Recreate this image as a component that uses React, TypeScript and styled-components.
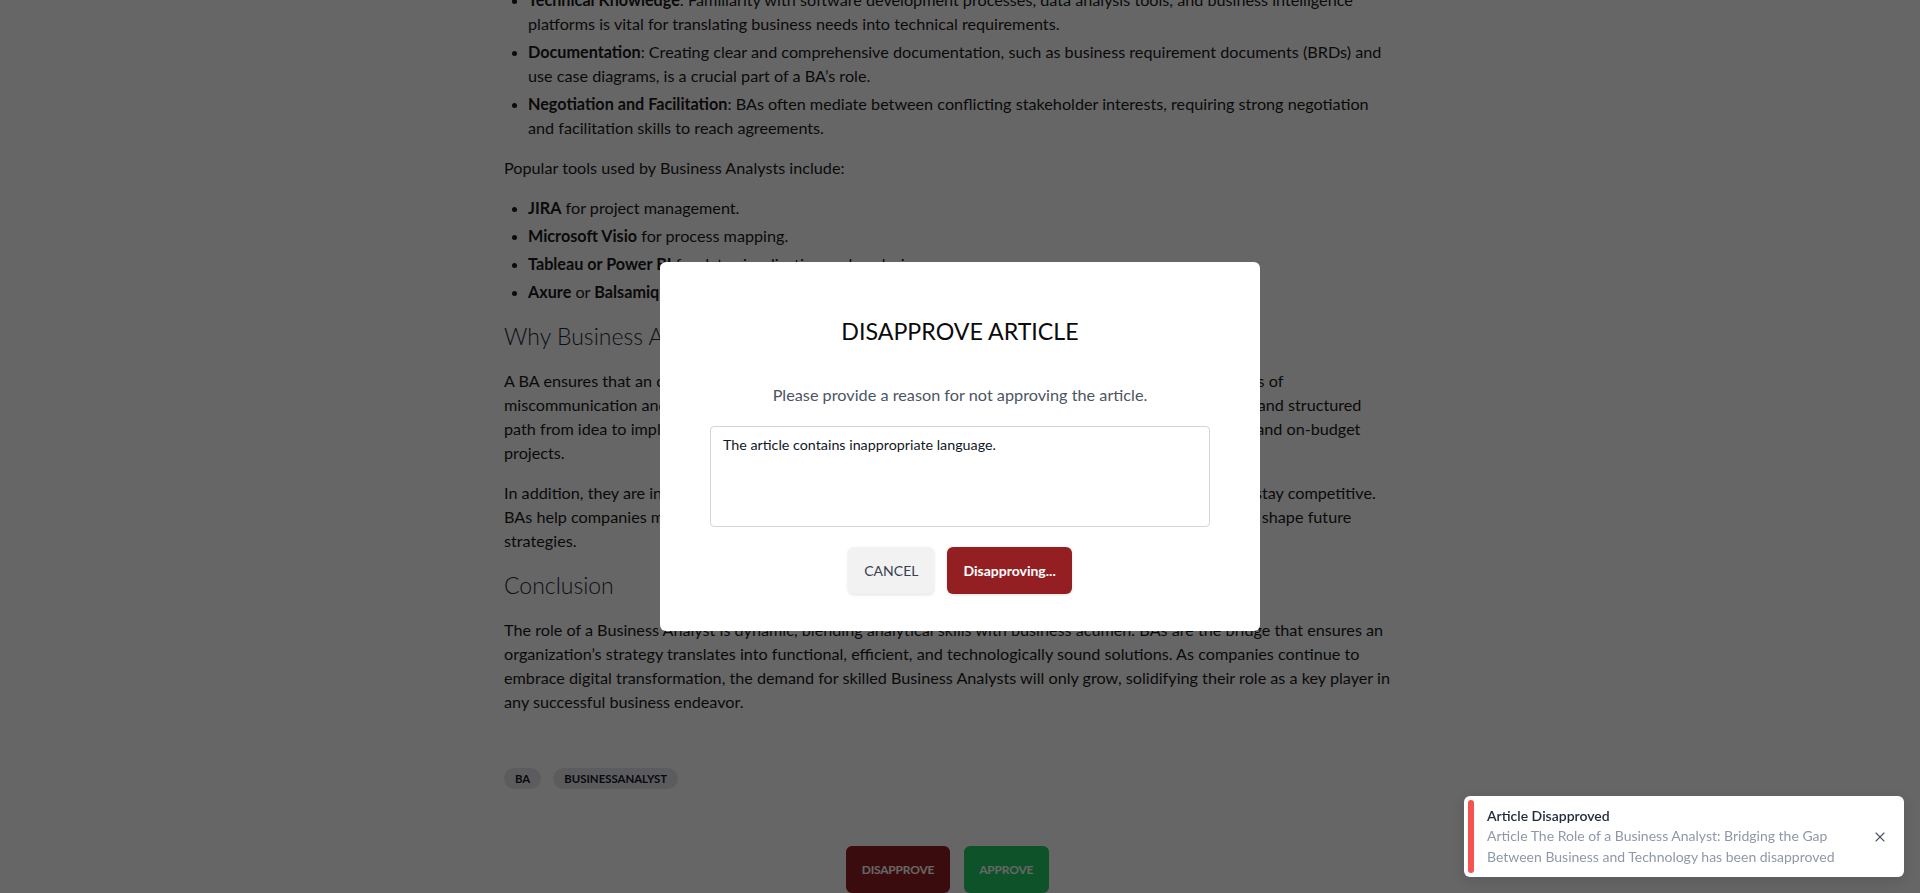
import React from "react"
import styled, { createGlobalStyle } from "styled-components"
import { X } from "lucide-react"

const Global = createGlobalStyle`
    html, body {
        margin: 0;
        height: 100%;
        overflow: hidden;
        background: #ffffff;
        font-family: Lato, "Segoe UI", sans-serif;
        color: #1a1a1a;
    }
    * { box-sizing: border-box; }
`

type ButtonTone = "danger" | "success" | "muted"

const tones: Record<ButtonTone, { bg: string, fg: string, weight: number }> = {
    danger: { bg: "#931f22", fg: "#ffffff", weight: 700 },
    success: { bg: "#22cc64", fg: "#ffffff", weight: 700 },
    muted: { bg: "#f2f2f2", fg: "#374151", weight: 400 },
}

export default function App() {
    return <>
        <Global />
        <Page>
            <Article>
                <FirstList>
                    <Item><b>Technical Knowledge</b>: Familiarity with software development processes, data analysis tools, and business intelligence platforms is vital for translating business needs into technical requirements.</Item>
                    <Item><b>Documentation</b>: Creating clear and comprehensive documentation, such as business requirement documents (BRDs) and use case diagrams, is a crucial part of a BA’s role.</Item>
                    <Item><b>Negotiation and Facilitation</b>: BAs often mediate between conflicting stakeholder interests, requiring strong negotiation and facilitation skills to reach agreements.</Item>
                </FirstList>
                <Para>Popular tools used by Business Analysts include:</Para>
                <List>
                    <Item><b>JIRA</b> for project management.</Item>
                    <Item><b>Microsoft Visio</b> for process mapping.</Item>
                    <Item><b>Tableau or Power BI</b> for data visualization and analysis.</Item>
                    <Item><b>Axure</b> or <b>Balsamiq</b> for wireframing and prototyping.</Item>
                </List>
                <Heading>Why Business Analysts Are Essential</Heading>
                <Para>A BA ensures that an organization’s technology investments deliver real value, reducing the potential pitfalls of miscommunication and misaligned expectations between key stakeholders. Their work helps create a clear and structured path from idea to implementation, which ultimately leads to fewer revisions and more successful, on-time, and on‑budget projects.</Para>
                <Para>In addition, they are instrumental in helping organizations adapt to changing market conditions in order to stay competitive. BAs help companies make data-driven decisions by analyzing market trends and providing insights that can shape future strategies.</Para>
                <Heading>Conclusion</Heading>
                <Para>The role of a Business Analyst is dynamic, blending analytical skills with business acumen. BAs are the bridge that ensures an organization’s strategy translates into functional, efficient, and technologically sound solutions. As companies continue to embrace digital transformation, the demand for skilled Business Analysts will only grow, solidifying their role as a key player in any successful business endeavor.</Para>
                <Tags>
                    <Tag>BA</Tag>
                    <Tag>BusinessAnalyst</Tag>
                </Tags>
                <Actions>
                    <Button $tone="danger" $upper $small>Disapprove</Button>
                    <Button $tone="success" $upper $small>Approve</Button>
                </Actions>
            </Article>
        </Page>

        <Overlay>
            <Modal>
                <ModalTitle>Disapprove Article</ModalTitle>
                <ModalText>Please provide a reason for not approving the article.</ModalText>
                <Reason readOnly value="The article contains inappropriate language." />
                <ModalActions>
                    <Button $tone="muted" $upper $shadow>Cancel</Button>
                    <Button $tone="danger" $shadow>Disapproving...</Button>
                </ModalActions>
            </Modal>
        </Overlay>

        <Toast>
            <ToastBar />
            <ToastBody>
                <ToastTitle>Article Disapproved</ToastTitle>
                <ToastText>Article The Role of a Business Analyst: Bridging the Gap Between Business and Technology has been disapproved</ToastText>
            </ToastBody>
            <ToastClose aria-label="Close"><X size={16} strokeWidth={1.6} /></ToastClose>
        </Toast>
    </>
}

const Page = styled.main`
    display: flex;
    justify-content: center;
    padding-right: 20px;
`
const Article = styled.article`
    width: 892px;
    font-size: 16.2px;
    line-height: 24px;
`
const List = styled.ul`
    margin: 16px 0;
    padding-left: 24px;
    list-style: disc;
`
const FirstList = styled(List)`
    margin-top: -12px;
`
const Item = styled.li`
    margin-bottom: 4px;
    &:last-child { margin-bottom: 0; }
    &::marker { font-size: 14px; }
    b { font-weight: 700; }
`
const Para = styled.p`
    margin: 16px 0;
`
const Heading = styled.h2`
    margin: 16px 0;
    font-size: 23px;
    line-height: 33px;
    font-weight: 300;
    color: #1f2937;
`
const Tags = styled.div`
    display: flex;
    gap: 12px;
    margin-top: 54px;
`
const Tag = styled.span`
    height: 21px;
    padding: 0 11px;
    border-radius: 999px;
    background: #e5e7eb;
    color: #111827;
    font-size: 11.4px;
    font-weight: 700;
    line-height: 21px;
    text-transform: uppercase;
`
const Actions = styled.div`
    display: flex;
    justify-content: center;
    gap: 14px;
    margin-top: 57px;
    padding-right: 5px;
`
const Button = styled.button<{ $tone: ButtonTone, $upper?: boolean, $shadow?: boolean, $small?: boolean }>`
    height: 47px;
    padding: 0 ${p => p.$small ? 15.5 : 16}px;
    border: none;
    border-radius: 6px;
    background: ${p => tones[p.$tone].bg};
    color: ${p => tones[p.$tone].fg};
    font-family: Lato, "Segoe UI", sans-serif;
    font-size: ${p => p.$small ? 12 : 14}px;
    letter-spacing: ${p => p.$small ? "-0.2px" : "0"};
    font-weight: ${p => tones[p.$tone].weight};
    text-transform: ${p => p.$upper ? "uppercase" : "none"};
    box-shadow: ${p => p.$shadow ? "0 1px 3px rgba(0,0,0,0.12)" : "none"};
    cursor: pointer;
`
const Overlay = styled.div`
    position: fixed;
    inset: 0;
    background: rgba(0, 0, 0, 0.6);
    display: flex;
    align-items: center;
    justify-content: center;
`
const Modal = styled.div`
    width: 600px;
    padding: 36px 50px 37px;
    background: #ffffff;
    border-radius: 6px;
    display: flex;
    flex-direction: column;
    align-items: center;
`
const ModalTitle = styled.h3`
    margin: 17px 0 0;
    font-size: 23.2px;
    line-height: 32px;
    font-weight: 400;
    color: #0b0b0b;
    text-transform: uppercase;
`
const ModalText = styled.p`
    margin: 36px 0 0;
    font-size: 16.25px;
    line-height: 24px;
    color: #4b5563;
`
const Reason = styled.textarea`
    margin-top: 19px;
    width: 500px;
    height: 101px;
    padding: 7px 12px;
    border: 1px solid #d1d5db;
    border-radius: 4px;
    resize: none;
    font-family: Lato, "Segoe UI", sans-serif;
    font-size: 14.3px;
    line-height: 21px;
    color: #111827;
    outline: none;
`
const ModalActions = styled.div`
    display: flex;
    gap: 13px;
    margin-top: 20px;
`
const Toast = styled.div`
    position: fixed;
    right: 16px;
    bottom: 16px;
    width: 440px;
    padding: 4px 16px 4px 4px;
    display: flex;
    align-items: stretch;
    background: #ffffff;
    border-radius: 6px;
    box-shadow: 0 4px 14px rgba(0, 0, 0, 0.12);
`
const ToastBar = styled.div`
    width: 6px;
    flex-shrink: 0;
    border-radius: 3px;
    background: #f55252;
`
const ToastBody = styled.div`
    flex: 1;
    padding: 6px 0 6px 13px;
`
const ToastTitle = styled.div`
    font-size: 14px;
    line-height: 20px;
    font-weight: 600;
    color: #1f2937;
`
const ToastText = styled.div`
    font-size: 14px;
    line-height: 20.5px;
    color: #8f98a8;
`
const ToastClose = styled.button`
    align-self: center;
    margin-left: 12px;
    padding: 0;
    border: none;
    background: none;
    color: #4b5563;
    display: flex;
    cursor: pointer;
`
